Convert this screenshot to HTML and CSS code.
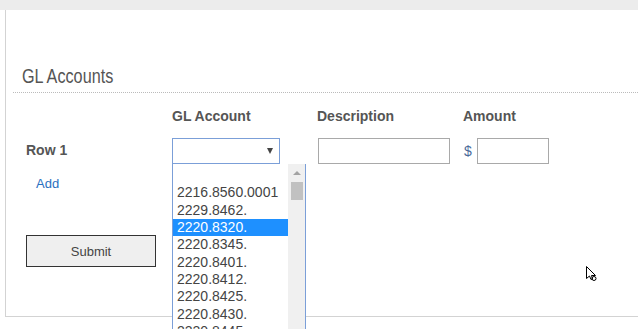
FILE: index.html
```html
<!DOCTYPE html>
<html>
<head>
<meta charset="utf-8">
<link rel="stylesheet" href="styles.css">
</head>
<body>
<div class="topbar"></div>
<div class="panel">
  <h2 class="title"><span class="title-text">GL Accounts</span></h2>
  <div class="form">
    <div class="grid head">
      <span></span>
      <span>GL Account</span>
      <span>Description</span>
      <span>Amount</span>
    </div>
    <div class="grid row">
      <span class="row-label">Row 1</span>
      <div class="select-wrap">
        <div class="select"><span class="caret"></span></div>
        <div class="dropdown">
          <ul class="options">
            <li class="blank"></li>
            <li>2216.8560.0001</li>
            <li>2229.8462.</li>
            <li class="sel">2220.8320.</li>
            <li>2220.8345.</li>
            <li>2220.8401.</li>
            <li>2220.8412.</li>
            <li>2220.8425.</li>
            <li>2220.8430.</li>
            <li>2220.8445.</li>
          </ul>
          <div class="scroll">
            <span class="up"></span>
            <span class="thumb"></span>
          </div>
        </div>
      </div>
      <input class="desc" type="text">
      <div class="amount"><span class="dollar">$</span><input class="amt" type="text"></div>
    </div>
    <a class="add" href="#">Add</a>
    <button class="submit" type="button">Submit</button>
  </div>
</div>
<svg class="cursor" width="14" height="18" viewBox="0 0 14 18">
  <path d="M0.5 0.5 L0.5 12.5 L3.5 10 L5 13.5 L6.5 13 L5.5 9.5 L9.5 9.5 Z" fill="#fff" stroke="#000" stroke-width="1"/>
  <circle cx="8" cy="12.5" r="2" fill="none" stroke="#000" stroke-width="1"/>
</svg>
</body>
</html>
```

FILE: styles.css
```css
html {
  overflow: hidden;
  height: 329px;
}

body {
  margin: 0;
  padding: 0;
  height: 329px;
  background: #fff;
  font-family: "Liberation Sans", Arial, sans-serif;
  color: #555;
}

.topbar {
  height: 10px;
  background: #ececec;
}

.panel {
  margin-left: 5px;
  padding-top: 55px;
  height: 251px;
  border-left: 1px solid #d3d3d3;
  border-bottom: 1px solid #d3d3d3;
}

.title {
  margin: 0 0 0 7px;
  padding: 0 0 4px 9px;
  font-family: "Liberation Sans", Arial, sans-serif;
  font-weight: normal;
  font-size: 20px;
  line-height: 23px;
  color: #555;
  border-bottom: 1px dotted #bbb;
}

.title-text {
  display: inline-block;
  transform: scaleX(0.81);
  transform-origin: left center;
}

.form {
  padding-left: 20px;
  display: flex;
  flex-direction: column;
  align-items: flex-start;
}

.grid {
  display: grid;
  grid-template-columns: 146px 145px 146px auto;
  align-items: center;
}

.head {
  margin-top: 15px;
  font-weight: bold;
  font-size: 14px;
  line-height: 16px;
  color: #555;
}

.row {
  margin-top: 14px;
  height: 26px;
}

.row-label {
  font-weight: bold;
  font-size: 14px;
  line-height: 16px;
  margin-top: -3px;
  color: #555;
}

.select-wrap {
  position: relative;
  width: 108px;
  height: 26px;
}

.select {
  box-sizing: border-box;
  width: 108px;
  height: 26px;
  border: 1px solid #7b9fd8;
  background: #fff;
  display: flex;
  align-items: center;
  justify-content: flex-end;
  padding-right: 6px;
}

.caret {
  width: 0;
  height: 0;
  border-left: 3.5px solid transparent;
  border-right: 3.5px solid transparent;
  border-top: 6px solid #444;
}

.dropdown {
  position: absolute;
  left: 0;
  top: 26px;
  box-sizing: border-box;
  width: 134px;
  height: 165px;
  border: 1px solid #7b9fd8;
  border-top: 0;
  border-bottom: 0;
  background: #fff;
  display: flex;
  overflow: hidden;
  z-index: 5;
}

.options {
  list-style: none;
  margin: 0;
  padding: 3px 0 0;
  width: 115px;
  font-family: "Liberation Sans", Arial, sans-serif;
  font-size: 14px;
  color: #444;
}

.options li {
  height: 17.33px;
  line-height: 17.33px;
  padding-left: 4px;
  white-space: nowrap;
}

.options li.sel {
  background: #1e90ff;
  color: #fff;
}

.scroll {
  width: 17px;
  background: #f0f0f0;
  display: flex;
  flex-direction: column;
  align-items: center;
}

.up {
  margin-top: 7px;
  width: 0;
  height: 0;
  border-left: 4px solid transparent;
  border-right: 4px solid transparent;
  border-bottom: 4px solid #a3a3a3;
}

.thumb {
  margin-top: 7px;
  width: 12px;
  height: 18px;
  background: #c1c1c1;
}

.desc {
  box-sizing: border-box;
  margin: 0 0 0 1px;
  width: 132px;
  height: 26px;
  border: 1px solid #a9a9a9;
  padding: 0;
}

.amount {
  display: flex;
  align-items: center;
}

.dollar {
  margin-left: 1px;
  font-size: 14px;
  color: #4a6a9a;
  width: 13px;
}

.amt {
  box-sizing: border-box;
  margin: 0;
  width: 72px;
  height: 26px;
  border: 1px solid #a9a9a9;
  padding: 0;
}

.add {
  margin: 12px 0 0 10px;
  font-size: 13px;
  line-height: 15px;
  color: #2a6fc0;
  text-decoration: none;
}

.submit {
  margin-top: 44px;
  box-sizing: border-box;
  width: 130px;
  height: 32px;
  background: #efefef;
  border: 1px solid #333;
  border-radius: 0;
  font-family: "Liberation Sans", Arial, sans-serif;
  font-size: 13px;
  color: #444;
  padding: 0;
}

.cursor {
  position: absolute;
  left: 586px;
  top: 266px;
}
```
